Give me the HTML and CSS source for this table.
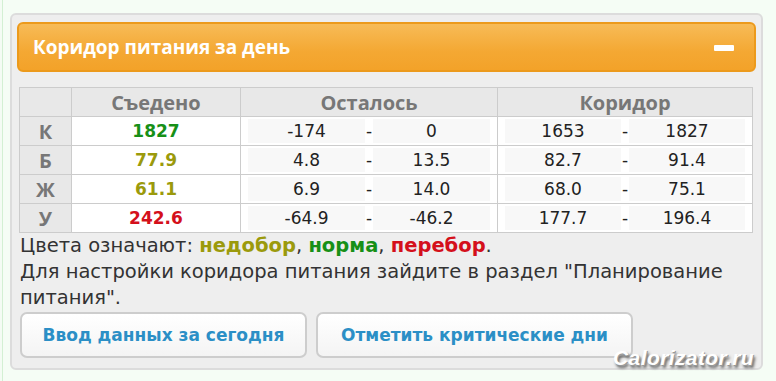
FILE: index.html
```html
<!DOCTYPE html>
<html lang="ru">
<head>
<meta charset="utf-8">
<title>Коридор питания за день</title>
<link rel="stylesheet" href="styles.css">
</head>
<body>
<div class="panel">
  <div class="panel-head">
    <span class="panel-title">Коридор питания за день</span>
    <span class="collapse"></span>
  </div>
  <table class="corridor">
    <thead>
      <tr><th class="lbl"></th><th>Съедено</th><th>Осталось</th><th>Коридор</th></tr>
    </thead>
    <tbody>
      <tr>
        <td class="lbl">К</td><td class="eaten ok">1827</td>
        <td class="range"><div class="pair"><span class="box">-174</span><span class="dash">-</span><span class="box">0</span></div></td>
        <td class="range"><div class="pair"><span class="box">1653</span><span class="dash">-</span><span class="box">1827</span></div></td>
      </tr>
      <tr>
        <td class="lbl">Б</td><td class="eaten low">77.9</td>
        <td class="range"><div class="pair"><span class="box">4.8</span><span class="dash">-</span><span class="box">13.5</span></div></td>
        <td class="range"><div class="pair"><span class="box">82.7</span><span class="dash">-</span><span class="box">91.4</span></div></td>
      </tr>
      <tr>
        <td class="lbl">Ж</td><td class="eaten low">61.1</td>
        <td class="range"><div class="pair"><span class="box">6.9</span><span class="dash">-</span><span class="box">14.0</span></div></td>
        <td class="range"><div class="pair"><span class="box">68.0</span><span class="dash">-</span><span class="box">75.1</span></div></td>
      </tr>
      <tr>
        <td class="lbl">У</td><td class="eaten over">242.6</td>
        <td class="range"><div class="pair"><span class="box">-64.9</span><span class="dash">-</span><span class="box">-46.2</span></div></td>
        <td class="range"><div class="pair"><span class="box">177.7</span><span class="dash">-</span><span class="box">196.4</span></div></td>
      </tr>
    </tbody>
  </table>
  <div class="note">
    Цвета означают: <b class="low">недобор</b>, <b class="ok">норма</b>, <b class="over">перебор</b>.<br>
    Для настройки коридора питания зайдите в раздел "Планирование питания".
  </div>
  <div class="actions">
    <a class="btn btn-one" href="#">Ввод данных за сегодня</a>
    <a class="btn btn-two" href="#">Отметить критические дни</a>
  </div>
  <span class="watermark">Calorizator.ru</span>
</div>
</body>
</html>
```
FILE: styles.css
```css
html, body {
  margin: 0;
  padding: 0;
}
body {
  background: linear-gradient(to right, #f4fcf4 2px, #d3f0d3 2px, #d3f0d3 3px, #f5fdf5 3px);
  padding: 13px 0 0 10px;
  height: 381px;
  box-sizing: border-box;
  font-family: "DejaVu Sans", Verdana, sans-serif;
  color: #333;
}
.panel {
  position: relative;
  width: 753px;
  height: 357px;
  box-sizing: border-box;
  background: #eeeeee;
  border: 2px solid #dcdcdc;
  border-radius: 6px;
  padding: 7px 5px 0 5px;
}
.panel-head {
  height: 50px;
  box-sizing: border-box;
  border: 2px solid #ec9a1c;
  border-radius: 6px;
  background: linear-gradient(to bottom, #f7bb57, #f4a833 60%, #f3a229);
  display: flex;
  align-items: center;
  justify-content: space-between;
  padding: 0 20px 0 14px;
}
.panel-title {
  color: #fff;
  font-family: "Open Sans", "DejaVu Sans", sans-serif;
  font-weight: bold;
  font-size: 19px;
  margin-top: -1px;
}
.collapse {
  width: 20px;
  height: 6px;
  background: #fff;
  border-radius: 1px;
  margin-top: 2px;
}
.corridor {
  margin: 15px 0 0 2px;
  width: 734px;
  border-collapse: collapse;
  border: 1px solid #cccccc;
  table-layout: fixed;
  font-size: 17px;
}
.corridor th, .corridor td {
  border: 1px solid #cccccc;
  padding: 0;
  height: 28px;
  text-align: center;
}
.corridor th {
  background: #e8e8e8;
  color: #777;
  font-family: "Open Sans", "DejaVu Sans", sans-serif;
  font-weight: bold;
  font-size: 20px;
}
.corridor th.lbl, .corridor td.lbl {
  width: 51px;
  background: #e8e8e8;
  color: #777;
  font-family: "Open Sans", "DejaVu Sans", sans-serif;
  font-weight: bold;
  font-size: 20px;
}
.corridor th:nth-child(2) { width: 168px; }
.corridor th:nth-child(3) { width: 256px; }
.eaten {
  background: #fff;
  font-weight: bold;
}
.range {
  background: #fff;
}
.pair {
  display: flex;
  align-items: center;
  padding: 0 7px 0 7px;
  height: 28px;
  box-sizing: border-box;
}
.box {
  flex: 1;
  background: #f8f8f8;
  height: 24px;
  line-height: 24px;
  color: #222;
}
.dash {
  width: 8px;
  color: #222;
  text-align: center;
}
.ok { color: #179017; }
.low { color: #9b9a0c; }
.over { color: #d4101b; }
.note {
  font-size: 19.5px;
  line-height: 26px;
  padding: 0 4px 0 3px;
  color: #333;
}
.note b { font-weight: bold; }
.actions {
  display: flex;
  gap: 9px;
  margin: 1px 0 0 3px;
}
.btn {
  display: flex;
  align-items: center;
  justify-content: center;
  height: 46px;
  box-sizing: border-box;
  border: 2px solid #cdcdcd;
  border-radius: 7px;
  background: linear-gradient(to bottom, #ffffff, #f4f4f4);
  color: #2b8fc6;
  font-weight: bold;
  font-size: 17px;
  text-decoration: none;
}
.btn-one { width: 287px; }
.btn-two { width: 317px; }
.watermark {
  position: absolute;
  right: 7px;
  bottom: -2px;
  color: #fff;
  font-family: "Liberation Sans", Arial, sans-serif;
  font-weight: bold;
  font-style: italic;
  font-size: 21px;
  letter-spacing: 0.4px;
  text-shadow: 1px 1px 0 #999, 2px 3px 3px #555;
}
```
